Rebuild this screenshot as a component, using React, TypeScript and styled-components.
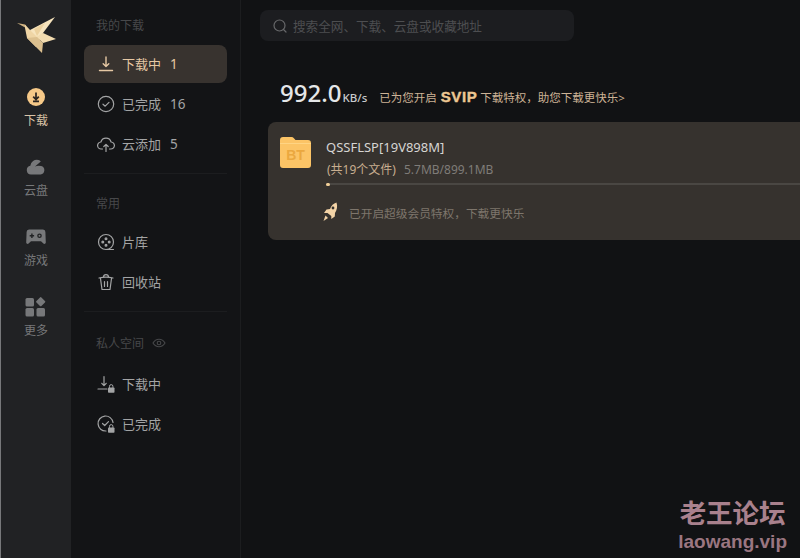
import { ReactNode } from "react"
import styled, { createGlobalStyle } from "styled-components"

const GlobalStyle = createGlobalStyle`
    html, body {
        margin: 0;
        padding: 0;
        background: #111214;
    }
    * {
        box-sizing: border-box;
    }
`

const font = `"Noto Sans", "Noto Sans CJK SC", sans-serif`

const Page = styled.div`
    position: relative;
    display: flex;
    width: 800px;
    height: 558px;
    overflow: hidden;
    background: #111214;
    font-family: ${font};
`

// far left column with logo and the big nav entries
const Rail = styled.nav`
    display: flex;
    flex-direction: column;
    align-items: center;
    flex: none;
    width: 71px;
    background: #212224;
    border-left: 1px solid #77787a;
`

const LogoBox = styled.div`
    display: flex;
    justify-content: center;
    align-items: center;
    height: 62px;
    padding-top: 8px;
    margin-bottom: 25px;
`

const RailIcon = styled.div`
    display: flex;
    align-items: center;
    justify-content: center;
    height: 20px;
`

const RailItem = styled.div<{ $active?: boolean }>`
    display: flex;
    flex-direction: column;
    align-items: center;
    height: 70px;
    gap: 6px;
    font-size: 12px;
    line-height: 16px;
    color: ${(p) => (p.$active ? "#d9c3a7" : "#77787a")};
`

const Sidebar = styled.aside`
    display: flex;
    flex-direction: column;
    flex: none;
    width: 170px;
    padding: 0 13px;
    background: #131416;
    border-right: 1px solid #1c1d1f;
`

const SectionTitle = styled.div<{ $height: number; $top: number }>`
    display: flex;
    align-items: center;
    gap: 8px;
    height: ${(p) => p.$height}px;
    padding-top: ${(p) => p.$top}px;
    padding-left: 12px;
    font-size: 12px;
    color: #47484a;
`

const SideRow = styled.div<{ $active?: boolean }>`
    display: flex;
    align-items: center;
    width: 143px;
    height: 38px;
    margin-bottom: 2px;
    padding-left: 13px;
    padding-bottom: 1px;
    border-radius: 8px;
    font-size: 13px;
    background: ${(p) => (p.$active ? "#38332f" : "transparent")};
    color: ${(p) => (p.$active ? "#e6c8a4" : "#a3a4a5")};

    & svg {
        flex: none;
    }
`

const RowLabel = styled.span`
    margin-left: 7px;
`

const RowCount = styled.span`
    margin-left: 9px;
    font-size: 13.5px;
`

const Divider = styled.div`
    width: 143px;
    height: 1px;
    margin-top: 8px;
    background: #1c1d1f;
`

const Main = styled.main`
    display: flex;
    flex-direction: column;
    flex: 1;
    min-width: 0;
    padding: 10px 0 0 27px;
`

const Search = styled.div`
    display: flex;
    align-items: center;
    gap: 6px;
    width: 314px;
    height: 31px;
    margin-left: -8px;
    padding-left: 13px;
    border-radius: 8px;
    background: #1c1d20;
    font-size: 12.6px;
    color: #4d4e50;
`

const SpeedRow = styled.div`
    display: flex;
    align-items: baseline;
    height: 52px;
    margin-top: 30px;
    margin-left: 12px;
    padding-top: 2px;
`

const SpeedValue = styled.span`
    font-size: 24px;
    font-weight: 500;
    line-height: 40px;
    color: #e4e6e8;
`

const SpeedUnit = styled.span`
    margin-left: 1px;
    font-size: 11.5px;
    font-weight: 500;
    color: #c9cbcd;
`

const Promo = styled.span`
    margin-left: 12px;
    font-size: 11.5px;
    color: #cdb396;
`

const Svip = styled.b`
    margin: 0 3px 0 4px;
    font-family: "Liberation Sans", sans-serif;
    font-size: 15px;
    font-weight: 700;
    letter-spacing: 0.6px;
    -webkit-text-stroke: 0.4px #ecc692;
    color: #ecc692;
`

const Card = styled.section`
    display: flex;
    flex-direction: column;
    height: 118px;
    margin-top: -1px;
    padding: 15px 0 0 12px;
    border-radius: 8px 0 0 8px;
    background: #36322e;
`

const CardTop = styled.div`
    display: flex;
    gap: 15px;
`

const CardBody = styled.div`
    display: flex;
    flex-direction: column;
    flex: 1;
    min-width: 0;
`

const FileName = styled.div`
    height: 20px;
    font-size: 13px;
    line-height: 20px;
    color: #d6d5d3;
`

const FileMeta = styled.div`
    display: flex;
    gap: 8px;
    height: 20px;
    margin-top: 3px;
    padding-left: 1px;
    font-size: 12px;
    line-height: 20px;
    color: #7f7c78;
`

const FileCount = styled.span`
    color: #c8ae90;
`

const Track = styled.div`
    height: 2px;
    margin-top: 3px;
    background: #4a4743;
`

const TrackFill = styled.div`
    height: 3px;
    border-radius: 2px;
    background: #f2cf98;
`

const Perk = styled.div`
    display: flex;
    align-items: center;
    gap: 10px;
    margin-top: 17px;
    margin-left: 42px;
    font-size: 11.7px;
    color: #7e766c;
`

const Watermark = styled.div`
    position: absolute;
    right: 13px;
    bottom: 4px;
    display: flex;
    flex-direction: column;
    align-items: center;
    color: #a9818d;
    font-weight: 700;
`

const WatermarkTitle = styled.div`
    font-family: "Liberation Sans", "Noto Sans CJK SC", sans-serif;
    font-size: 26.5px;
    line-height: 32px;
`

const WatermarkUrl = styled.div`
    font-family: "Liberation Sans", sans-serif;
    font-size: 19px;
    line-height: 24px;
    opacity: 0.9;
`

const LogoIcon = () => (
    <svg width="42" height="40" viewBox="0 0 42 40">
        <polygon points="2,8 10,9.500 11,13" fill="#cfb281" />
        <polygon points="10,9.500 15,15 28,18 21,32 12,23 10,13" fill="#efd5a5" />
        <polygon points="15,15 40,2 28,18 22,22" fill="#f7e4bd" />
        <polygon points="19,14 30,8 22,21" fill="#ecd19e" />
        <polygon points="22,22 28,18 41,24 28,28" fill="#f3dcb0" />
        <polygon points="12,23 22,22 28,28 27,38 21,32" fill="#dcc08f" />
    </svg>
)

const DownloadBadge = () => (
    <svg width="18" height="18" viewBox="0 0 18 18">
        <circle cx="9" cy="9" r="9" fill="#f6c988" />
        <path d="M9 4.500v6M6.200 8.600 9 11.600l2.800-3M6 13.400h6" stroke="#2a2420" strokeWidth="1.700" fill="none" />
    </svg>
)

const CloudIcon = () => (
    <svg width="20" height="16" viewBox="0 0 20 16">
        <path d="M5 15.500a4.400 4.400 0 0 1-.7-8.700A6.600 6.600 0 0 1 12.600 1a5.800 5.800 0 0 1 2.200 1.400L9 7.600a8 8 0 0 1 6.200-.5 4.300 4.300 0 0 1-.6 8.400z" fill="#77787a" />
    </svg>
)

const GameIcon = () => (
    <svg width="20" height="16" viewBox="0 0 20 16">
        <path fillRule="evenodd" fill="#77787a" d="M3 .5h14A2.500 2.500 0 0 1 19.400 3l.4 10.500a1.400 1.400 0 0 1-2.400 1L15 12.300H5l-2.400 2.200a1.400 1.400 0 0 1-2.400-1L.6 3A2.500 2.500 0 0 1 3 .5zM5.200 4.600v1.500H3.700v1.400h1.500V9h1.400V7.500h1.500V6.100H6.600V4.600zM13.500 4.500a2.300 2.300 0 1 0 0 4.600 2.300 2.300 0 0 0 0-4.600zm0 1.300a1 1 0 1 1 0 2 1 1 0 0 1 0-2z" />
    </svg>
)

const MoreIcon = () => (
    <svg width="21" height="20" viewBox="0 0 21 20">
        <rect x="0.500" y="1" width="8.500" height="8.500" rx="1.500" fill="#77787a" />
        <rect x="0.500" y="11" width="8.500" height="8.500" rx="1.500" fill="#77787a" />
        <rect x="11.500" y="11" width="8.500" height="8.500" rx="1.500" fill="#77787a" />
        <rect x="12.200" y="1.200" width="7" height="7" rx="1" fill="#77787a" transform="rotate(45 15.700 4.700)" />
    </svg>
)

const Glyph = ({ children }: { children: ReactNode }) => (
    <svg width="18" height="18" viewBox="0 0 18 18" fill="none" stroke="currentColor" strokeWidth="1.200" strokeLinecap="round" strokeLinejoin="round">
        {children}
    </svg>
)

const Lock = () => (
    <>
        <path d="M12.500 12.500v-1.200a1.700 1.700 0 0 1 3.400 0v1.200" strokeWidth="1" />
        <rect x="11" y="12.500" width="6.500" height="5.200" rx="0.800" fill="currentColor" stroke="none" />
    </>
)

const CheckCircle = () => (
    <Glyph>
        <circle cx="9" cy="9" r="7.700" />
        <path d="m6 9.200 2.200 2 3.800-3.800" />
    </Glyph>
)

const FolderBt = () => (
    <svg width="31" height="31" viewBox="0 0 31 31">
        <path d="M3 0h8.500a3 3 0 0 1 2.400 1.200L15.500 3H28a3 3 0 0 1 3 3v22a3 3 0 0 1-3 3H3a3 3 0 0 1-3-3V3a3 3 0 0 1 3-3z" fill="#fcc466" />
        <path d="M0 6h31v1H0z" fill="#ffd483" />
        <text x="15.500" y="23" textAnchor="middle" fontFamily="Liberation Sans, sans-serif" fontSize="14" fontWeight="700" fill="#eba83f">BT</text>
    </svg>
)

const Rocket = () => (
    <svg width="17" height="20" viewBox="0 0 17 20">
        <path d="M14.500 0.500c1.200 3.500.6 7.500-1.500 10.500l-.2 3.500-3.500 2.500v-3L5.500 11 2 11 4.500 7.500l3.500-.5c1.200-3.500 3.500-5.500 6.500-6.500z" fill="#f3d3a6" />
        <circle cx="11" cy="6" r="1.400" fill="#36322e" />
        <path d="M3.500 13.500 6 16l-4.500 3z" fill="#f3d3a6" />
    </svg>
)

const railItems = [
    { label: "下载", icon: <DownloadBadge />, active: true },
    { label: "云盘", icon: <CloudIcon /> },
    { label: "游戏", icon: <GameIcon /> },
    { label: "更多", icon: <MoreIcon /> },
]

export default function App() {
    return (
        <Page>
            <GlobalStyle />
            <Rail>
                <LogoBox>
                    <LogoIcon />
                </LogoBox>
                {railItems.map((item) => (
                    <RailItem key={item.label} $active={item.active}>
                        <RailIcon>{item.icon}</RailIcon>
                        <span>{item.label}</span>
                    </RailItem>
                ))}
            </Rail>

            <Sidebar>
                <SectionTitle $height={45} $top={5}>我的下载</SectionTitle>
                <SideRow $active>
                    <Glyph>
                        <path d="M9 2v9.500M6.200 8.800 9 11.600l2.800-2.800M2.500 15.500h13" strokeWidth="1.400" />
                    </Glyph>
                    <RowLabel>下载中</RowLabel>
                    <RowCount>1</RowCount>
                </SideRow>
                <SideRow>
                    <CheckCircle />
                    <RowLabel>已完成</RowLabel>
                    <RowCount>16</RowCount>
                </SideRow>
                <SideRow>
                    <Glyph>
                        <path d="M5.500 14H4.300a3.500 3.500 0 0 1-.4-7 5.300 5.300 0 0 1 10.200 0 3.500 3.500 0 0 1-.4 7h-1.200" />
                        <path d="M9 16.500V9.500M6.800 11.500 9 9.300l2.200 2.200" />
                    </Glyph>
                    <RowLabel>云添加</RowLabel>
                    <RowCount>5</RowCount>
                </SideRow>
                <Divider />
                <SectionTitle $height={49} $top={9}>常用</SectionTitle>
                <SideRow>
                    <Glyph>
                        <circle cx="9" cy="9" r="7.500" />
                        <path d="M9 16.500h7.500" />
                        <circle cx="9" cy="5.800" r="0.900" fill="currentColor" />
                        <circle cx="5.800" cy="9" r="0.900" fill="currentColor" />
                        <circle cx="12.200" cy="9" r="0.900" fill="currentColor" />
                        <circle cx="9" cy="12.200" r="0.900" fill="currentColor" />
                    </Glyph>
                    <RowLabel>片库</RowLabel>
                </SideRow>
                <SideRow>
                    <Glyph>
                        <path d="M2 5c4-1 10-1 14 0M6.500 4c0-3.300 5-3.300 5 0M3.500 5.500 5 16.500h8l1.500-11M7.500 8.500v5M10.500 8.500v5" />
                    </Glyph>
                    <RowLabel>回收站</RowLabel>
                </SideRow>
                <Divider />
                <SectionTitle $height={53} $top={9}>
                    私人空间
                    <svg width="14" height="14" viewBox="0 0 14 14" fill="none" stroke="#47484a" strokeWidth="1.100">
                        <path d="M1 7c3-5 9-5 12 0-3 5-9 5-12 0z" />
                        <circle cx="7" cy="7" r="1.800" />
                    </svg>
                </SectionTitle>
                <SideRow>
                    <Glyph>
                        <path d="M7 1.500v9M4.800 8.300 7 10.600l2.200-2.300M1 14h9" />
                        <Lock />
                    </Glyph>
                    <RowLabel>下载中</RowLabel>
                </SideRow>
                <SideRow>
                    <Glyph>
                        <path d="M16 7.500a7.500 7.500 0 1 0-7 8.500" />
                        <path d="m5.500 8.500 2.200 2 3.800-3.800" />
                        <Lock />
                    </Glyph>
                    <RowLabel>已完成</RowLabel>
                </SideRow>
            </Sidebar>

            <Main>
                <Search>
                    <svg width="14" height="14" viewBox="0 0 14 14" fill="none" stroke="#67686a" strokeWidth="1.200" strokeLinecap="round">
                        <circle cx="6.500" cy="6.500" r="5.500" />
                        <path d="m10.500 10.500 2.500 2.500" />
                    </svg>
                    搜索全网、下载、云盘或收藏地址
                </Search>
                <SpeedRow>
                    <SpeedValue>992.0</SpeedValue>
                    <SpeedUnit>KB/s</SpeedUnit>
                    <Promo>
                        已为您开启<Svip>SVIP</Svip>下载特权，助您下载更快乐&gt;
                    </Promo>
                </SpeedRow>
                <Card>
                    <CardTop>
                        <FolderBt />
                        <CardBody>
                            <FileName>QSSFLSP[19V898M]</FileName>
                            <FileMeta>
                                <FileCount>(共19个文件)</FileCount>
                                <span>5.7MB/899.1MB</span>
                            </FileMeta>
                            <Track>
                                <TrackFill style={{ width: `${(5.7 / 899.1) * 100 * 1.2}%` }} />
                            </Track>
                        </CardBody>
                    </CardTop>
                    <Perk>
                        <Rocket />
                        已开启超级会员特权，下载更快乐
                    </Perk>
                </Card>
            </Main>

            <Watermark>
                <WatermarkTitle>老王论坛</WatermarkTitle>
                <WatermarkUrl>laowang.vip</WatermarkUrl>
            </Watermark>
        </Page>
    )
}
